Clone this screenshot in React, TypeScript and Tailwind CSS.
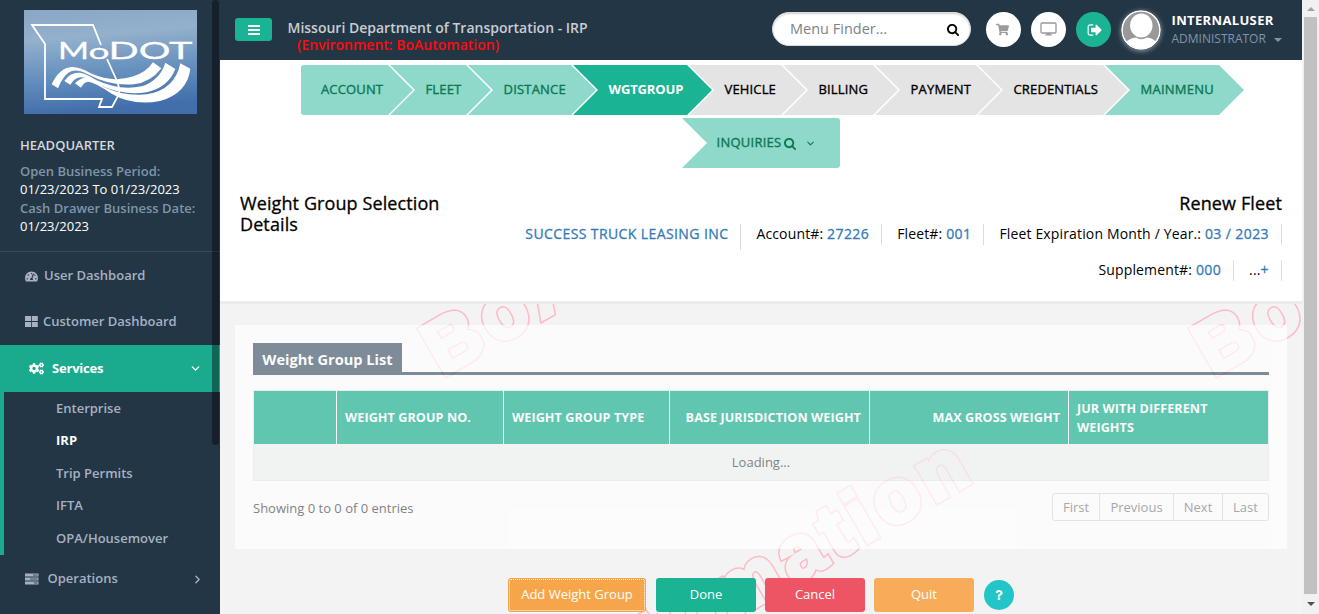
import React from "react";
import { FaCogs, FaShoppingCart, FaTachometerAlt, FaQuestion } from "react-icons/fa";
import { FiChevronDown, FiChevronRight } from "react-icons/fi";

function SearchIcon({ className }: { className: string }) {
  return (
    <svg viewBox="0 0 1792 1792" className={className} fill="currentColor">
      <path d="M1152 832q0-185-131.5-316.5t-316.5-131.5-316.5 131.5-131.5 316.5 131.5 316.5 316.5 131.5 316.5-131.5 131.5-316.5zm512 832q0 52-38 90t-90 38q-54 0-90-38l-343-342q-179 124-399 124-143 0-273.5-55.5t-225-150-150-225-55.5-273.5 55.5-273.5 150-225 225-150 273.5-55.5 273.5 55.5 225 150 150 225 55.5 273.5q0 220-124 399l343 343q37 37 37 90z" />
    </svg>
  );
}

function SignOutIcon() {
  return (
    <svg viewBox="0 0 1792 1792" className="size-[16px]" fill="currentColor">
      <path d="M704 1440q0 4 1 20t.5 26.5-3 23.5-10 19.5-20.5 6.5h-320q-119 0-203.5-84.5t-84.5-203.5v-704q0-119 84.5-203.5t203.5-84.5h320q13 0 22.5 9.5t9.5 22.5q0 4 1 20t.5 26.5-3 23.5-10 19.5-20.5 6.5h-320q-66 0-113 47t-47 113v704q0 66 47 113t113 47h312l11.5 1 11.5 3 8 5.5 7 9 2 13.5zm928-544q0 26-19 45l-544 544q-19 19-45 19t-45-19-19-45v-288h-448q-26 0-45-19t-19-45v-384q0-26 19-45t45-19h448v-288q0-26 19-45t45-19 45 19l544 544q19 19 19 45z" />
    </svg>
  );
}

function Logo() {
  return (
    <svg width="173" height="104" viewBox="0 0 173 104" className="block">
      <defs>
        <linearGradient id="sky" x1="0" y1="0" x2="0.15" y2="1">
          <stop offset="0" stopColor="#89a7c6" />
          <stop offset="0.3" stopColor="#93b0cc" />
          <stop offset="0.65" stopColor="#6690be" />
          <stop offset="1" stopColor="#426fab" />
        </linearGradient>
      </defs>
      <rect width="173" height="104" fill="url(#sky)" />
      <path
        d="M77 35 69 15H8L21 34V89H78L75 97H88L95 84Q96 79 93 71L83 49"
        fill="none"
        stroke="#fff"
        strokeWidth="1.8"
      />
      <g fill="#fff" stroke="#fff" strokeWidth="0.3" fontFamily="Lato, sans-serif" fontWeight="400">
        <text x="34" y="49" fontSize="23.500" textLength="31" lengthAdjust="spacingAndGlyphs">M</text>
        <text x="64.500" y="49" fontSize="22" textLength="21" lengthAdjust="spacingAndGlyphs">o</text>
        <text x="84.500" y="49" fontSize="23.500" textLength="84" lengthAdjust="spacingAndGlyphs">DOT</text>
      </g>
      <g transform="scale(.3333) translate(-72 -30)" fill="#fff">
        <path d="M155 253Q178 203 215 201Q238 200 272 220Q340 250 400 229Q440 216 459 187L484 205Q452 247 402 253Q330 259 262 222Q235 208 215 213Q192 220 174 265Z" />
        <path d="M193 243Q210 217 239 218Q258 220 290 241Q360 273 425 259Q480 241 496 188L526 207Q505 262 440 277Q375 288 305 258Q266 232 243 232Q223 233 211 254Z" />
        <path d="M225 250Q240 232 262 233Q281 236 310 260Q370 289 440 283Q525 270 541 190L571 206Q562 280 480 303Q400 319 335 281Q285 247 265 245Q252 245 243 263Z" />
      </g>
    </svg>
  );
}

const subItems = ["Enterprise", "IRP", "Trip Permits", "IFTA", "OPA/Housemover"];

function Sidebar() {
  return (
    <aside className="relative flex w-[220px] shrink-0 flex-col bg-[#233646] text-[13px] font-semibold text-[#a7b1c2]">
      <div className="flex h-[252px] flex-col border-b border-[#364b5e] pt-[10px]">
        <div className="pl-6"><Logo /></div>
        <div className="pt-[22px] pl-5 leading-[18px]">
          <div className="text-[#d5d8dc]">HEADQUARTER</div>
          <div className="mt-2 text-[#8095a8]">Open Business Period:</div>
          <div className="font-normal text-white">01/23/2023 To 01/23/2023</div>
          <div className="mt-px text-[#8095a8]">Cash Drawer Business Date:</div>
          <div className="font-normal text-white">01/23/2023</div>
        </div>
      </div>
      <div className="flex h-[46px] items-center gap-[6px] pt-[2px] pl-[25px]"><FaTachometerAlt size={13} />User Dashboard</div>
      <div className="flex h-[47px] items-center gap-[5px] pl-[25px]">
        <svg width="13" height="12" viewBox="0 0 13 12" fill="currentColor"><path d="M0 0h6v5H0zM6.800 0h6v5h-6zM0 6h6v5H0zM6.800 6h6v5h-6z" /></svg>
        Customer Dashboard
      </div>
      <div className="flex h-[47px] items-center bg-[#1aab8e] pr-[18px] pl-[29px] font-bold text-white">
        <FaCogs size={15} />
        <span className="ml-2 flex-1 tracking-[-0.2px]">Services</span>
        <FiChevronDown size={13} strokeWidth={2.5} />
      </div>
      <div className="flex h-[163px] flex-col border-l-4 border-[#1aab8e]">
        {subItems.map((s) => (
          <div key={s} className={s === "IRP" ? "h-[32.5px] pl-[52px] leading-[31px] font-bold text-white" : s === "IFTA" ? "h-[32.5px] pl-[52px] leading-[31px]" : "h-[32.5px] pl-[52px] leading-[32.5px]"}>{s}</div>
        ))}
      </div>
      <div className="flex h-[46px] items-center pt-[2px] pr-4 pl-[25px]">
        <svg width="13.500" height="12" viewBox="0 0 27 24" className="-mt-px">
          <path d="M0 1h27v6H0zM0 9h27v6H0zM0 17h27v6H0z" fill="currentColor" />
          <path d="M16 4h9M10 12h15M18 20h7" stroke="#3d4f63" strokeWidth="2" />
        </svg>
        <span className="ml-[9px] flex-1">Operations</span>
        <FiChevronRight size={13} strokeWidth={2.5} />
      </div>
      <div className="absolute top-0 left-[212px] h-[445px] w-[7px] rounded-full bg-black/40" />
    </aside>
  );
}

function TopBar() {
  return (
    <header className="flex h-[60px] items-start bg-[#233646]">
      <button className="mt-[18px] ml-[15px] flex h-[23px] w-[37px] items-center justify-center rounded-[3px] bg-[#1ab394]">
        <svg width="12" height="10" viewBox="0 0 12 10" fill="#fff"><path d="M0 0h12v2H0zM0 4h12v2H0zM0 8h12v2H0z" /></svg>
      </button>
      <div className="mt-[19px] ml-[15.5px] w-[484.500px] text-[14px] leading-[17px] font-semibold">
        <div className="text-[#c9cdd2]">Missouri Department of Transportation - IRP</div>
        <div className="pl-[9.5px] text-[#ff0a0a]">(Environment: BoAutomation)</div>
      </div>
      <div className="mt-3 flex h-[34px] w-[199px] items-center justify-between rounded-full border border-[#d8dcdf] bg-white pr-[10px] pl-[17px] text-[14.5px] text-[#7d8287] shadow-[inset_0_1px_2px_rgba(0,0,0,.2)]">
        Menu Finder...
        <SearchIcon className="size-[13px] text-black" />
      </div>
      <div className="mt-3 ml-[15px] flex size-[35px] items-center justify-center rounded-full bg-white pr-[3px] text-[#9b9b9b]"><FaShoppingCart size={13} /></div>
      <div className="mt-3 ml-[10px] flex size-[35px] items-center justify-center rounded-full bg-white">
        <svg width="17" height="15" viewBox="0 0 17 15">
          <rect x="1" y="1" width="15" height="10" rx="1" fill="none" stroke="#999" strokeWidth="1.3" />
          <path d="M6.500 11h4v1.500h1.500v1h-7v-1h1.500z" fill="#999" />
        </svg>
      </div>
      <div className="mt-3 ml-[10px] flex size-[35px] items-center justify-center rounded-full bg-[#1ab394] pt-px pl-[2px] text-white"><SignOutIcon /></div>
      <svg width="40" height="40" viewBox="0 0 40 40" className="mt-[10px] ml-[10px] rounded-full shadow-[0_1px_5px_rgba(255,255,255,.5)]">
        <circle cx="20" cy="20" r="19" fill="#999" stroke="#fff" strokeWidth="1.6" />
        <path d="M5 32Q9 28 15 27.500Q20 31 26 27.500Q32 28 35 32Q29 38.500 20 38.500Q11 38.500 5 32Z" fill="#fff" />
        <ellipse cx="20.300" cy="15.500" rx="11.200" ry="12" fill="#fff" />
      </svg>
      <div className="mt-[10px] ml-[10.5px] text-[13px] leading-[20px]">
        <div className="font-bold tracking-[0.35px] text-white">INTERNALUSER</div>
        <div className="flex items-center text-[12px] leading-[18px] text-[#8095a8]">
          ADMINISTRATOR
          <span className="mt-[2px] ml-2 border-x-4 border-t-4 border-x-transparent border-t-[#8095a8]" />
        </div>
      </div>
    </header>
  );
}

const arrow = "flex h-[50px] items-center pl-[35.5px] [clip-path:polygon(0_0,calc(100%-25px)_0,100%_50%,calc(100%-25px)_100%,0_100%,25px_50%)] -ml-[23px] ";
const steps = [
  { t: "FLEET", c: "w-[101px] bg-[#8ed9ca] text-[#0c7750] tracking-[0.15px] [-webkit-text-stroke:0.35px]" },
  { t: "DISTANCE", c: "w-[128px] bg-[#8ed9ca] text-[#0c7750] tracking-[0.2px] [-webkit-text-stroke:0.35px]" },
  { t: "WGTGROUP", c: "w-[139px] bg-[#1ab394] text-white font-bold tracking-[-0.15px]" },
  { t: "VEHICLE", c: "w-[117px] bg-[#e4e4e4] text-black tracking-[0.15px] [-webkit-text-stroke:0.35px]" },
  { t: "BILLING", c: "w-[115px] bg-[#e4e4e4] text-black tracking-[0.15px] [-webkit-text-stroke:0.35px]" },
  { t: "PAYMENT", c: "w-[126px] bg-[#e4e4e4] text-black tracking-[0.2px] [-webkit-text-stroke:0.35px]" },
  { t: "CREDENTIALS", c: "w-[150px] bg-[#e4e4e4] text-black tracking-[0.15px] [-webkit-text-stroke:0.35px]" },
  { t: "MAINMENU", c: "w-[139px] bg-[#8ed9ca] text-[#0c7750] tracking-[0.25px] [-webkit-text-stroke:0.35px]" },
];

function Steps() {
  return (
    <nav className="pt-[5px] text-[13px]">
      <div className="flex pl-[81px]">
        <div className="flex h-[50px] w-[112px] items-center rounded-l-[3px] bg-[#8ed9ca] pl-5 tracking-[0.15px] text-[#0c7750] [-webkit-text-stroke:0.35px] [clip-path:polygon(0_0,calc(100%-25px)_0,100%_50%,calc(100%-25px)_100%,0_100%)]">ACCOUNT</div>
        {steps.map((s) => <div key={s.t} className={arrow + s.c}>{s.t}</div>)}
      </div>
      <div className="mt-[3px] ml-[462px] flex h-[50px] w-[158px] items-center rounded-r-[3px] bg-[#8ed9ca] pl-[34.5px] tracking-[0.25px] text-[#0c7750] [clip-path:polygon(0_0,100%_0,100%_100%,0_100%,25px_50%)]">
        <span className="[-webkit-text-stroke:0.35px]">INQUIRIES</span>
        <SearchIcon className="ml-[3px] size-[13px]" />
        <FiChevronDown size={11} className="ml-2" strokeWidth={2.4} />
      </div>
    </nav>
  );
}

function Fact({ label, value }: { label: string; value: string }) {
  return (
    <div className="h-[21px] border-r border-[#dcdcdc] pr-3 pl-[15px] leading-[19px] tracking-[0.15px] whitespace-nowrap">
      {label}<span className="tracking-[0.4px] text-[#337ab7] [-webkit-text-stroke:0.3px]">{value}</span>
    </div>
  );
}

function Summary() {
  return (
    <section className="flex h-[133px] justify-between pt-[25px] pr-5 pl-5 text-black">
      <h1 className="w-[220px] text-[18px] leading-[21px] tracking-[0.1px] [-webkit-text-stroke:0.3px]">Weight Group Selection Details</h1>
      <div className="flex flex-col items-end text-[14px]">
        <div className="text-[18px] leading-[21px] tracking-[0.12px] [-webkit-text-stroke:0.3px]">Renew Fleet</div>
        <div className="mt-[10px] flex">
          <div className="h-[26px] border-r border-[#dcdcdc] pr-3 leading-[19px] tracking-[0.4px] text-[#337ab7] [-webkit-text-stroke:0.3px]">SUCCESS TRUCK LEASING INC</div>
          <Fact label="Account#: " value="27226" />
          <Fact label="Fleet#: " value="001" />
          <Fact label="Fleet Expiration Month / Year.: " value="03 / 2023" />
        </div>
        <div className="mt-[10px] flex">
          <Fact label="Supplement#: " value="000" />
          <Fact label="..." value="+" />
        </div>
      </div>
    </section>
  );
}

function Mark() {
  return (
    <>
      <text fill="#ffb9c4" stroke="#ffb9c4" strokeWidth="6.8">BoAutomation</text>
      <text fill="#f3f3f3" stroke="#f3f3f3" strokeWidth="3.8">BoAutomation</text>
    </>
  );
}

function Watermark() {
  return (
    <svg width="1082" height="310" viewBox="220 304 1082 310" className="absolute top-0 left-0">
      <g fontFamily="Liberation Sans, sans-serif" fontWeight="700" fontSize="76" letterSpacing="6.6" strokeMiterlimit="8">
        <g transform="translate(442 377) rotate(-30)"><Mark /></g>
        <g transform="translate(1213 377) rotate(-30)"><Mark /></g>
        <g transform="translate(979.300 477.500) rotate(-30)" textAnchor="end"><Mark /></g>
      </g>
    </svg>
  );
}

function Panel() {
  const th = "flex items-center border-r border-white px-2 pb-px ";
  return (
    <section className="relative mx-[15px] mt-[21px] h-[224px] bg-white px-[18px] pt-[18px] text-[13px] text-[#4f5254] opacity-70">
      <div className="flex h-8 border-b-[3px] border-[#4d6072]">
        <h2 className="h-[32px] w-[149px] bg-[#4d6072] text-center text-[14.6px] leading-[32px] font-bold text-white">Weight Group List</h2>
      </div>
      <div className="mt-[15px] border border-[#e7eaec]">
        <div className="grid h-[53px] grid-cols-[83px_167px_166px_200px_199px_1fr] bg-[#22b495] text-[12.6px] leading-[19px] font-bold tracking-[0.08px] text-white">
          <div className={th} />
          <div className={th}>WEIGHT GROUP NO.</div>
          <div className={th}>WEIGHT GROUP TYPE</div>
          <div className={th + "justify-end"}>BASE JURISDICTION WEIGHT</div>
          <div className={th + "justify-end"}>MAX GROSS WEIGHT</div>
          <div className="flex items-center px-2">JUR WITH DIFFERENT<br />WEIGHTS</div>
        </div>
        <div className="h-[36px] bg-[#f0f3f2] text-center leading-[36px]">Loading...</div>
      </div>
      <div className="mt-3 flex justify-between">
        <div className="pt-[6px] leading-[18px]">Showing 0 to 0 of 0 entries</div>
        <div className="flex h-7 divide-x divide-[#dddddd] rounded-[3px] border border-[#dddddd] text-center leading-[27px] text-[#85898c]">
          <span className="w-[47px]">First</span>
          <span className="w-[74px]">Previous</span>
          <span className="w-[49px]">Next</span>
          <span className="w-[45px]">Last</span>
        </div>
      </div>
    </section>
  );
}

function Actions() {
  return (
    <div className="relative mt-[29px] flex items-center pl-[288px] text-[13px] leading-[20px] text-white">
      <button className="h-[34px] w-[138px] rounded-[3px] bg-[#f7a54a] pb-[2px] outline-1 -outline-offset-2 outline-white outline-dotted">Add Weight Group</button>
      <button className="ml-[10px] h-[34px] w-[100px] rounded-[3px] bg-[#1ab394] pb-[2px]">Done</button>
      <button className="ml-[9px] h-[34px] w-[100px] rounded-[3px] bg-[#ed5565] pb-[2px]">Cancel</button>
      <button className="ml-[9px] h-[34px] w-[100px] rounded-[3px] bg-[#f8ac59] pb-[2px]">Quit</button>
      <button className="ml-[10px] flex size-[30px] items-center justify-center rounded-full bg-[#23c6c8]"><FaQuestion size={10} /></button>
    </div>
  );
}

function Scrollbar() {
  return (
    <div className="flex w-[17px] shrink-0 flex-col items-center bg-[#f1f1f1]">
      <div className="flex h-[17px] items-center"><span className="border-x-4 border-b-4 border-x-transparent border-b-[#a3a3a3]" /></div>
      <div className="w-[13px] flex-1 bg-[#c1c1c1]" />
      <div className="flex h-5 items-center"><span className="border-x-4 border-t-4 border-x-transparent border-t-[#505050]" /></div>
    </div>
  );
}

export default function App() {
  return (
    <div className="flex h-[614px] w-[1319px] overflow-hidden bg-white font-['Open_Sans',sans-serif]">
      <Sidebar />
      <main className="flex min-w-0 flex-1 flex-col">
        <TopBar />
        <Steps />
        <Summary />
        <div className="h-[3px] shrink-0 bg-[#ececec]" />
        <div className="relative h-[310px] shrink-0 overflow-hidden bg-[#f3f3f3]">
          <Watermark />
          <div className="flow-root">
            <Panel />
            <Actions />
          </div>
        </div>
      </main>
      <Scrollbar />
    </div>
  );
}
